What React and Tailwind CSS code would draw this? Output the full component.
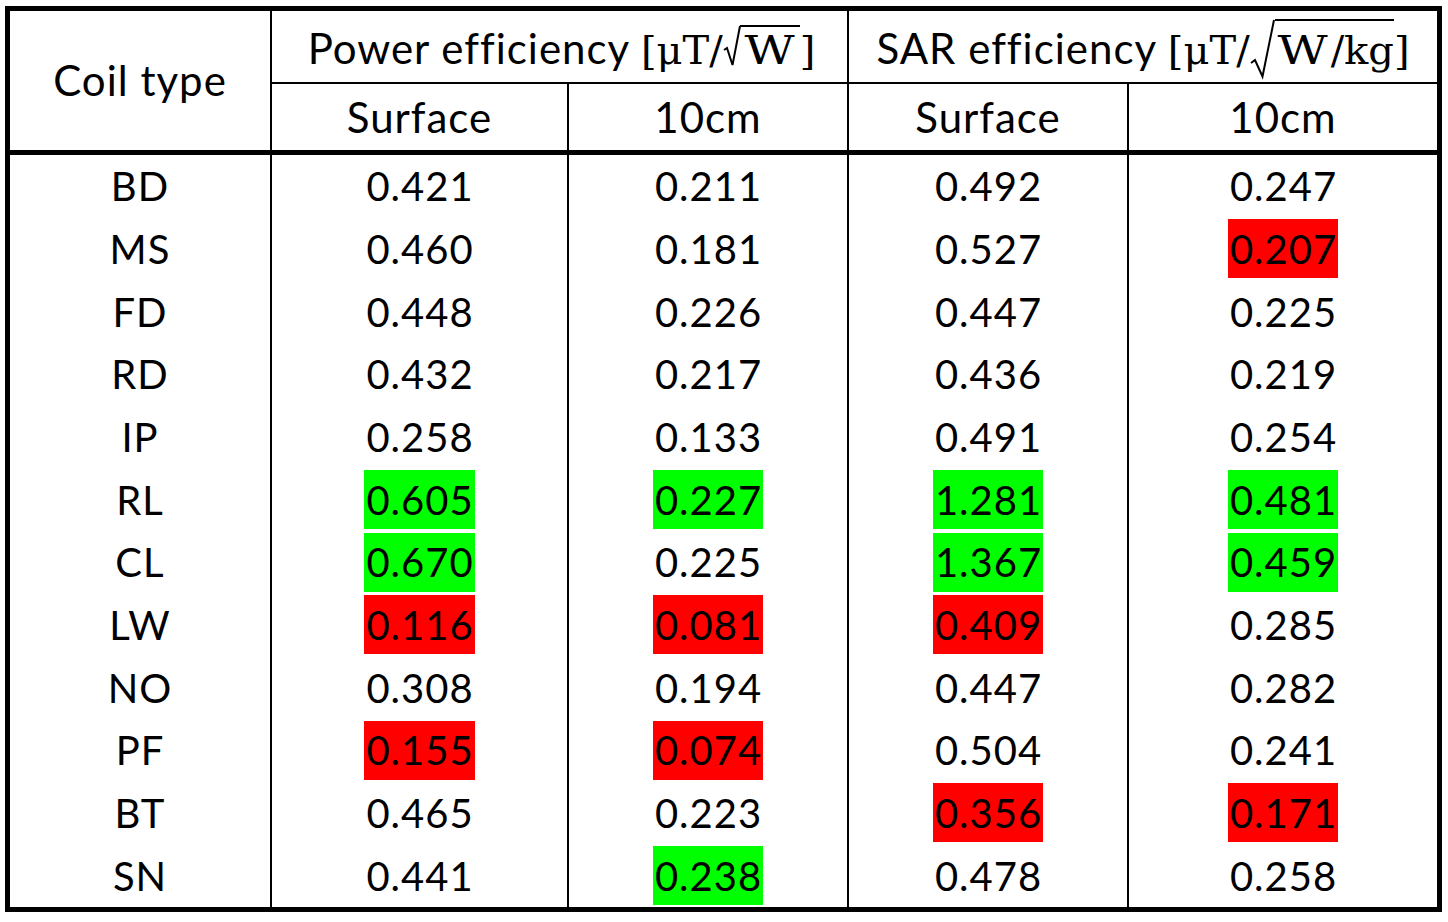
const rows = [
  ['BD', ['0.421', ''], ['0.211', ''], ['0.492', ''], ['0.247', '']],
  ['MS', ['0.460', ''], ['0.181', ''], ['0.527', ''], ['0.207', 'r']],
  ['FD', ['0.448', ''], ['0.226', ''], ['0.447', ''], ['0.225', '']],
  ['RD', ['0.432', ''], ['0.217', ''], ['0.436', ''], ['0.219', '']],
  ['IP', ['0.258', ''], ['0.133', ''], ['0.491', ''], ['0.254', '']],
  ['RL', ['0.605', 'g'], ['0.227', 'g'], ['1.281', 'g'], ['0.481', 'g']],
  ['CL', ['0.670', 'g'], ['0.225', ''], ['1.367', 'g'], ['0.459', 'g']],
  ['LW', ['0.116', 'r'], ['0.081', 'r'], ['0.409', 'r'], ['0.285', '']],
  ['NO', ['0.308', ''], ['0.194', ''], ['0.447', ''], ['0.282', '']],
  ['PF', ['0.155', 'r'], ['0.074', 'r'], ['0.504', ''], ['0.241', '']],
  ['BT', ['0.465', ''], ['0.223', ''], ['0.356', 'r'], ['0.171', 'r']],
  ['SN', ['0.441', ''], ['0.238', 'g'], ['0.478', ''], ['0.258', '']],
];

const cols = 'grid-cols-[260px_295px_278px_278px_308px]';

function Value({ v, mark }) {
  const bg = mark === 'g' ? 'bg-[#00ff00]' : mark === 'r' ? 'bg-[#ff0000]' : '';
  return (
    <span className={`inline-flex h-[59px] items-center pl-[2px] pr-[1px] tracking-[1px] ${bg}`}>{v}</span>
  );
}

// wide math-style W
function MathW({ w }) {
  return (
    <span className={`inline-block text-center ${w}`}>
      <span className="inline-block scale-x-[1.22]">W</span>
    </span>
  );
}

function Sqrt({ tall, children }) {
  if (tall) {
    return (
      <span className="relative inline-block pl-[25px] leading-none">
        <svg width="25" height="59" viewBox="0 0 25 59" className="absolute left-0 top-0 overflow-visible">
          <path d="M1 44 L5 41 L12.5 57.5 L24 1" fill="none" stroke="black" strokeWidth="2" />
        </svg>
        <span className="inline-block border-t-2 border-black pt-[9px] leading-none">{children}</span>
      </span>
    );
  }
  return (
    <span className="relative inline-block pl-[17px] leading-none">
      <svg width="18" height="41" viewBox="0 0 18 41" className="absolute left-0 top-0 overflow-visible">
        <path d="M1 25 L4 23 L9.5 40 L17 1" fill="none" stroke="black" strokeWidth="2" />
      </svg>
      <span className="inline-block border-t-2 border-black pt-[3px] leading-none">{children}</span>
    </span>
  );
}

export default function App() {
  return (
    <div className="w-[1448px] h-[922px] bg-white pl-[5px] pt-[6px] font-['Lato','Liberation_Sans',sans-serif] text-black text-[40px]">
      <div className="w-[1437px] border-[5px] border-black">
        <div className={`grid ${cols} grid-rows-[71px_66px] gap-[2px] bg-black text-[42px] tracking-[1px]`}>
          <div className="row-span-2 bg-white flex items-center justify-center">Coil type</div>
          <div className="col-span-2 bg-white flex items-center justify-center whitespace-nowrap pt-[4px] pl-[4px]">
            <span>
              Power efficiency{' '}
              <span className="font-['DejaVu_Serif',serif] text-[40px] tracking-normal leading-none">
                [μT/<Sqrt><MathW w="w-[60px]" /></Sqrt>]
              </span>
            </span>
          </div>
          <div className="col-span-2 bg-white flex items-center justify-center whitespace-nowrap pt-[4px]">
            <span>
              SAR efficiency{' '}
              <span className="font-['DejaVu_Serif',serif] text-[40px] tracking-normal leading-none">
                [μT/<Sqrt tall><MathW w="w-[56px]" />/kg</Sqrt>]
              </span>
            </span>
          </div>
          <div className="bg-white flex items-center justify-center">Surface</div>
          <div className="bg-white flex items-center justify-center">10cm</div>
          <div className="bg-white flex items-center justify-center">Surface</div>
          <div className="bg-white flex items-center justify-center">10cm</div>
        </div>
        <div className="h-[5px] bg-black" />
        <div className={`grid ${cols} grid-rows-[repeat(12,1fr)] h-[752px] gap-x-[2px] bg-black`}>
          {rows.map((r) => (
            <div key={r[0]} className="contents">
              <div className="bg-white flex items-center justify-center tracking-[1px]">{r[0]}</div>
              {r.slice(1).map(([v, m], i) => (
                <div key={i} className="bg-white flex items-center justify-center">
                  <Value v={v} mark={m} />
                </div>
              ))}
            </div>
          ))}
        </div>
      </div>
    </div>
  );
}
